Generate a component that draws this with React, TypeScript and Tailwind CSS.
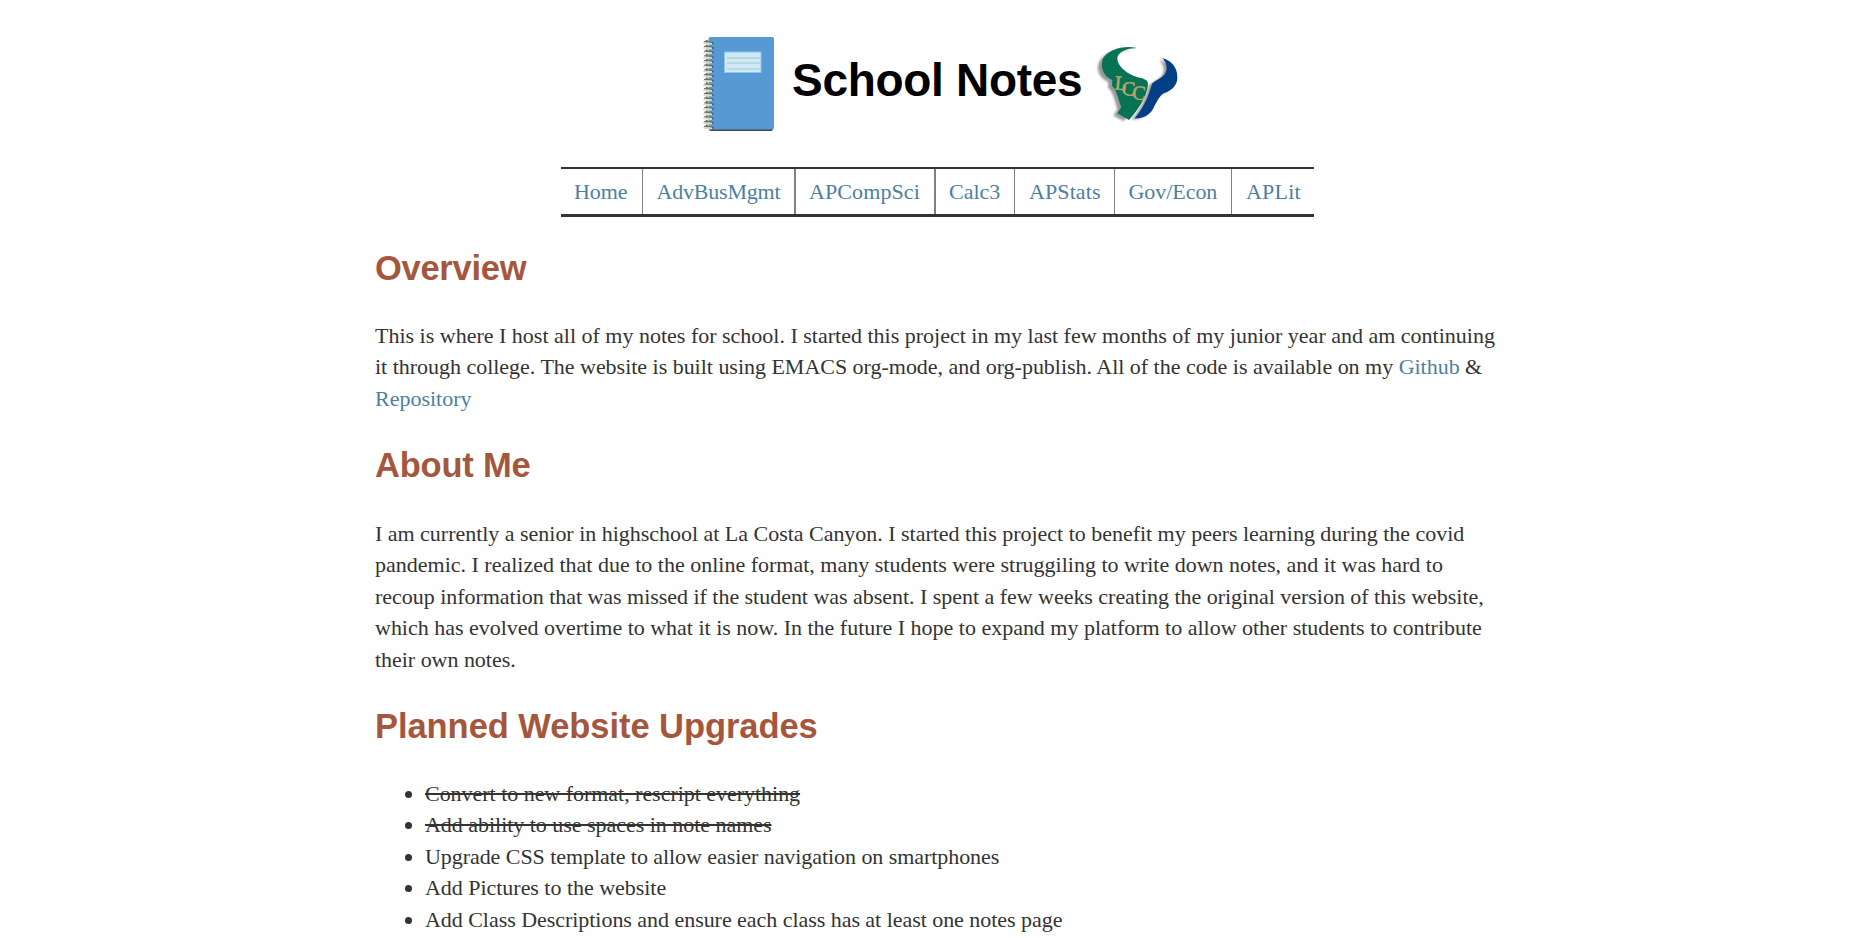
const subjects = [
  { name: "Home", cell: "w-[81px] pl-[13px] tracking-[-0.05px]" },
  { name: "AdvBusMgmt", cell: "w-[152px] border-l pl-[13.5px] tracking-[-0.2px]" },
  { name: "APCompSci", cell: "w-[140px] border-l-2 pl-[13px] tracking-[0.1px]" },
  { name: "Calc3", cell: "w-[80px] border-l-2 pl-[13px] tracking-[0px]" },
  { name: "APStats", cell: "w-[100px] border-l pl-[14px] tracking-[0.1px]" },
  { name: "Gov/Econ", cell: "w-[117px] border-l pl-[13.5px] tracking-[-0.05px]" },
  { name: "APLit", cell: "w-[83px] border-l pl-[14px] tracking-[0.2px]" },
];
const coils = Array.from({ length: 19 }, (_, i) => 43 + i * 4.7);

function Notebook() {
  return (
    <svg width="100" height="115" viewBox="690 25 100 115" className="shrink-0">
      <rect x="709" y="39" width="64" height="92" rx="2" fill="#404a54" />
      <rect x="708.500" y="37" width="65.500" height="92.500" rx="2" fill="#5699d3" />
      <path d="M706.800 40 V129" stroke="#6c6c5c" strokeWidth="2" strokeDasharray="3.200 1.500" />
      {coils.map((y) => (
        <g key={y} fill="none" strokeLinecap="round">
          <path d={`M704.5 ${y - 1.3} L712 ${y - 0.8}`} stroke="#6c7268" strokeWidth="1.2" />
          <path d={`M704 ${y + 0.2} L711.5 ${y + 0.8}`} stroke="#dcdcc8" strokeWidth="1.8" />
          <circle cx="712.800" cy={y + 0.2} r="1" fill="#4c6170" />
        </g>
      ))}
      <rect x="724.500" y="52" width="36.500" height="20.500" fill="#cfe8fa" stroke="#91c4ea" strokeWidth="1" />
      <path d="M727 58h33M727 63h33M727 69h33" stroke="#b4d1d0" strokeWidth="1.300" />
    </svg>
  );
}

function BullLogo() {
  return (
    <svg width="110" height="100" viewBox="0 0 330 300" className="shrink-0">
      <defs>
        <filter id="soft"><feGaussianBlur stdDeviation="2.500" /></filter>
      </defs>
      <g fill="#999" filter="url(#soft)">
        <path transform="translate(-12 6)" d="M152 40C115 31 68 45 54 75C44 100 57 126 82 135L81 153C95 160 102 193 109 217L97 236L128 252C154 226 182 192 187 149C190 135 174 129 158 127C126 117 93 91 99 66C105 48 131 39 152 40Z" />
        <path transform="translate(-9 5)" d="M232 69C260 77 277 96 277 128C277 149 262 165 240 171C226 176 216 197 204 222C193 239 175 248 149 249C173 221 190 188 201 146C213 132 242 128 245 102C246 87 239 78 232 69Z" />
      </g>
      <path fill="#077354" d="M152 38C113 31 67 45 53 73C45 100 57 126 82 135L81 153C96 164 99 194 109 216L97 235L132 255C158 225 184 190 189 149C190 134 174 130 158 127C125 117 91 90 98 64C105 47 131 39 152 40Z" />
      <path fill="#033f85" d="M232 69C260 77 278 98 277 128C277 149 262 165 240 173C226 178 216 197 204 222C193 241 173 251 149 250C173 222 190 188 201 146C214 132 240 128 245 104C246 87 239 78 232 69Z" />
      <g fill="#b8a566" stroke="#b8a566" strokeWidth="1.500" fontFamily="Liberation Serif, serif" fontSize="60">
        <text x="88" y="163" transform="rotate(5 88 163)">L</text>
        <text x="109" y="179" transform="rotate(5 109 179)">C</text>
        <text x="140" y="192" transform="rotate(5 140 192)">C</text>
      </g>
    </svg>
  );
}

function Heading({ children, className }: { children: string; className: string }) {
  return <h2 className={`h-[40px] font-[Liberation_Sans,Arial,sans-serif] text-[34.5px] leading-[40px] font-bold text-[#a5573e] ${className}`}>{children}</h2>;
}

export default function App() {
  return (
    <div className="h-[938px] overflow-hidden bg-white font-[Liberation_Serif,serif] text-[22px] leading-[31.5px] text-[#333]">
      <div className="ml-[375px] w-[1125px]">
        <header className="flex h-[167px] pl-[315px] pt-[25px]">
          <Notebook />
          <h1 className="w-[295px] pl-[2px] pt-[25px] font-[Liberation_Sans,Arial,sans-serif] text-[46px] leading-[60px] font-bold tracking-[-0.3px] whitespace-nowrap text-black">School Notes</h1>
          <div className="pt-[10px]"><BullLogo /></div>
        </header>
        <nav className="ml-[186px] flex h-[50px] w-[753px] border-t-2 border-b-[3px] border-[#333]">
          {subjects.map(({ name, cell }) => (
            <a key={name} href="#" className={`flex h-[45px] items-center border-[#808080] text-[#4d7f9f] ${cell}`}>{name}</a>
          ))}
        </nav>
        <Heading className="mt-[31px] tracking-[-0.28px]">Overview</Heading>
        <p className="mt-[31.500px] whitespace-nowrap">
          This is where I host all of my notes for school. I started this project in my last few months of my junior year and am continuing<br />
          <span className="tracking-[-0.02px]">it through college. The website is built using EMACS org-mode, and org-publish. All of the code is available on my <a href="#" className="text-[#4d7f9f]">Github</a> &amp;</span><br />
          <a href="#" className="text-[#4d7f9f]">Repository</a>
        </p>
        <Heading className="mt-[31px] tracking-[-0.2px]">About Me</Heading>
        <p className="mt-[32.500px] whitespace-nowrap tracking-[-0.03px]">
          <span className="tracking-[-0.02px]">I am currently a senior in highschool at La Costa Canyon. I started this project to benefit my peers learning during the covid</span><br />
          <span className="tracking-[0px]">pandemic. I realized that due to the online format, many students were struggiling to write down notes, and it was hard to</span><br />
          recoup information that was missed if the student was absent. I spent a few weeks creating the original version of this website,<br />
          <span className="tracking-[-0.01px]">which has evolved overtime to what it is now. In the future I hope to expand my platform to allow other students to contribute</span><br />
          their own notes.
        </p>
        <Heading className="mt-[31px] tracking-[-0.06px]">Planned Website Upgrades</Heading>
        <ul className="mt-[31.500px] list-disc pl-[50px] tracking-[-0.03px]">
          <li><del>Convert to new format, rescript everything</del></li>
          <li><del>Add ability to use spaces in note names</del></li>
          <li className="tracking-[-0.06px]">Upgrade CSS template to allow easier navigation on smartphones</li>
          <li>Add Pictures to the website</li>
          <li className="tracking-[-0.04px]">Add Class Descriptions and ensure each class has at least one notes page</li>
        </ul>
      </div>
    </div>
  );
}
